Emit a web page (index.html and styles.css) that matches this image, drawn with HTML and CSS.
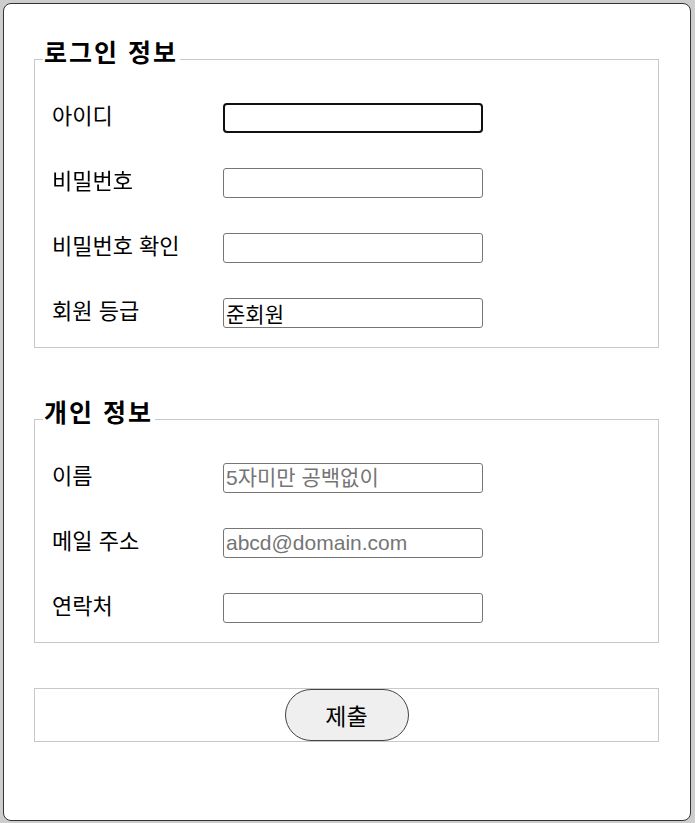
FILE: index.html
```html
<!DOCTYPE html>
<html lang="ko">
<head>
<meta charset="utf-8">
<title>회원 가입</title>
<link rel="stylesheet" href="styles.css">
</head>
<body>
<form class="page">
  <fieldset class="group group-login">
    <legend class="group-title">로그인 정보</legend>
    <div class="rows">
      <div class="row"><label class="label" for="uid">아이디</label><input class="field" id="uid" type="text" autofocus></div>
      <div class="row"><label class="label" for="pw">비밀번호</label><input class="field" id="pw" type="password"></div>
      <div class="row"><label class="label" for="pw2">비밀번호 확인</label><input class="field" id="pw2" type="password"></div>
      <div class="row"><label class="label" for="grade">회원 등급</label><input class="field" id="grade" type="text" value="준회원" readonly></div>
    </div>
  </fieldset>
  <fieldset class="group group-personal">
    <legend class="group-title">개인 정보</legend>
    <div class="rows">
      <div class="row"><label class="label" for="name">이름</label><input class="field" id="name" type="text" placeholder="5자미만 공백없이"></div>
      <div class="row"><label class="label" for="mail">메일 주소</label><input class="field" id="mail" type="email" placeholder="abcd@domain.com"></div>
      <div class="row"><label class="label" for="tel">연락처</label><input class="field" id="tel" type="tel"></div>
    </div>
  </fieldset>
  <fieldset class="group group-submit">
    <button class="submit" type="submit">제출</button>
  </fieldset>
</form>
</body>
</html>
```
FILE: styles.css
```css
html, body {
  margin: 0;
  padding: 0;
}
body {
  background: #cdcdcd;
  padding: 3px 4px 2px 3px;
  font-family: "Noto Sans CJK KR", "Noto Sans", sans-serif;
}
.page {
  box-sizing: border-box;
  height: 818px;
  background: #fff;
  border: 1px solid #333;
  border-radius: 8px;
  padding: 32px 31px 0 30px;
}
.group {
  margin: 0;
  padding: 0 0 19px 0;
  border: 1px solid #c8c8c8;
  min-width: 0;
}
.group-login {
  margin-bottom: 48px;
}
.group-personal {
  margin-bottom: 45px;
}
.group-title {
  margin-left: 8px;
  padding: 0 2px 16px 1px;
  font-size: 25px;
  letter-spacing: 2px;
  line-height: 30px;
  font-weight: 700;
  color: #000;
}
.rows {
  display: flex;
  flex-direction: column;
  gap: 35px;
  padding-top: 21px;
}
.row {
  display: flex;
  align-items: flex-start;
  height: 30px;
  padding-left: 17px;
}
.label {
  width: 171px;
  flex: none;
  padding-top: 1px;
  font-size: 22px;
  line-height: 20px;
  color: #000;
}
.field {
  box-sizing: border-box;
  width: 260px;
  height: 30px;
  margin: 0;
  padding: 1px 2px;
  border: 1px solid #767676;
  border-radius: 3px;
  font-family: "Liberation Sans", "Noto Sans CJK KR", sans-serif;
  font-size: 21px;
  color: #000;
  background: #fff;
}
.field::placeholder {
  color: #757575;
}
.group-submit {
  padding: 0;
  text-align: center;
}
.submit {
  box-sizing: border-box;
  width: 124px;
  height: 52px;
  margin: 0;
  border: 1px solid #444;
  border-radius: 26px;
  background: #efefef;
  font-family: "Noto Sans CJK KR", sans-serif;
  font-size: 23px;
  color: #000;
  vertical-align: top;
}
```
